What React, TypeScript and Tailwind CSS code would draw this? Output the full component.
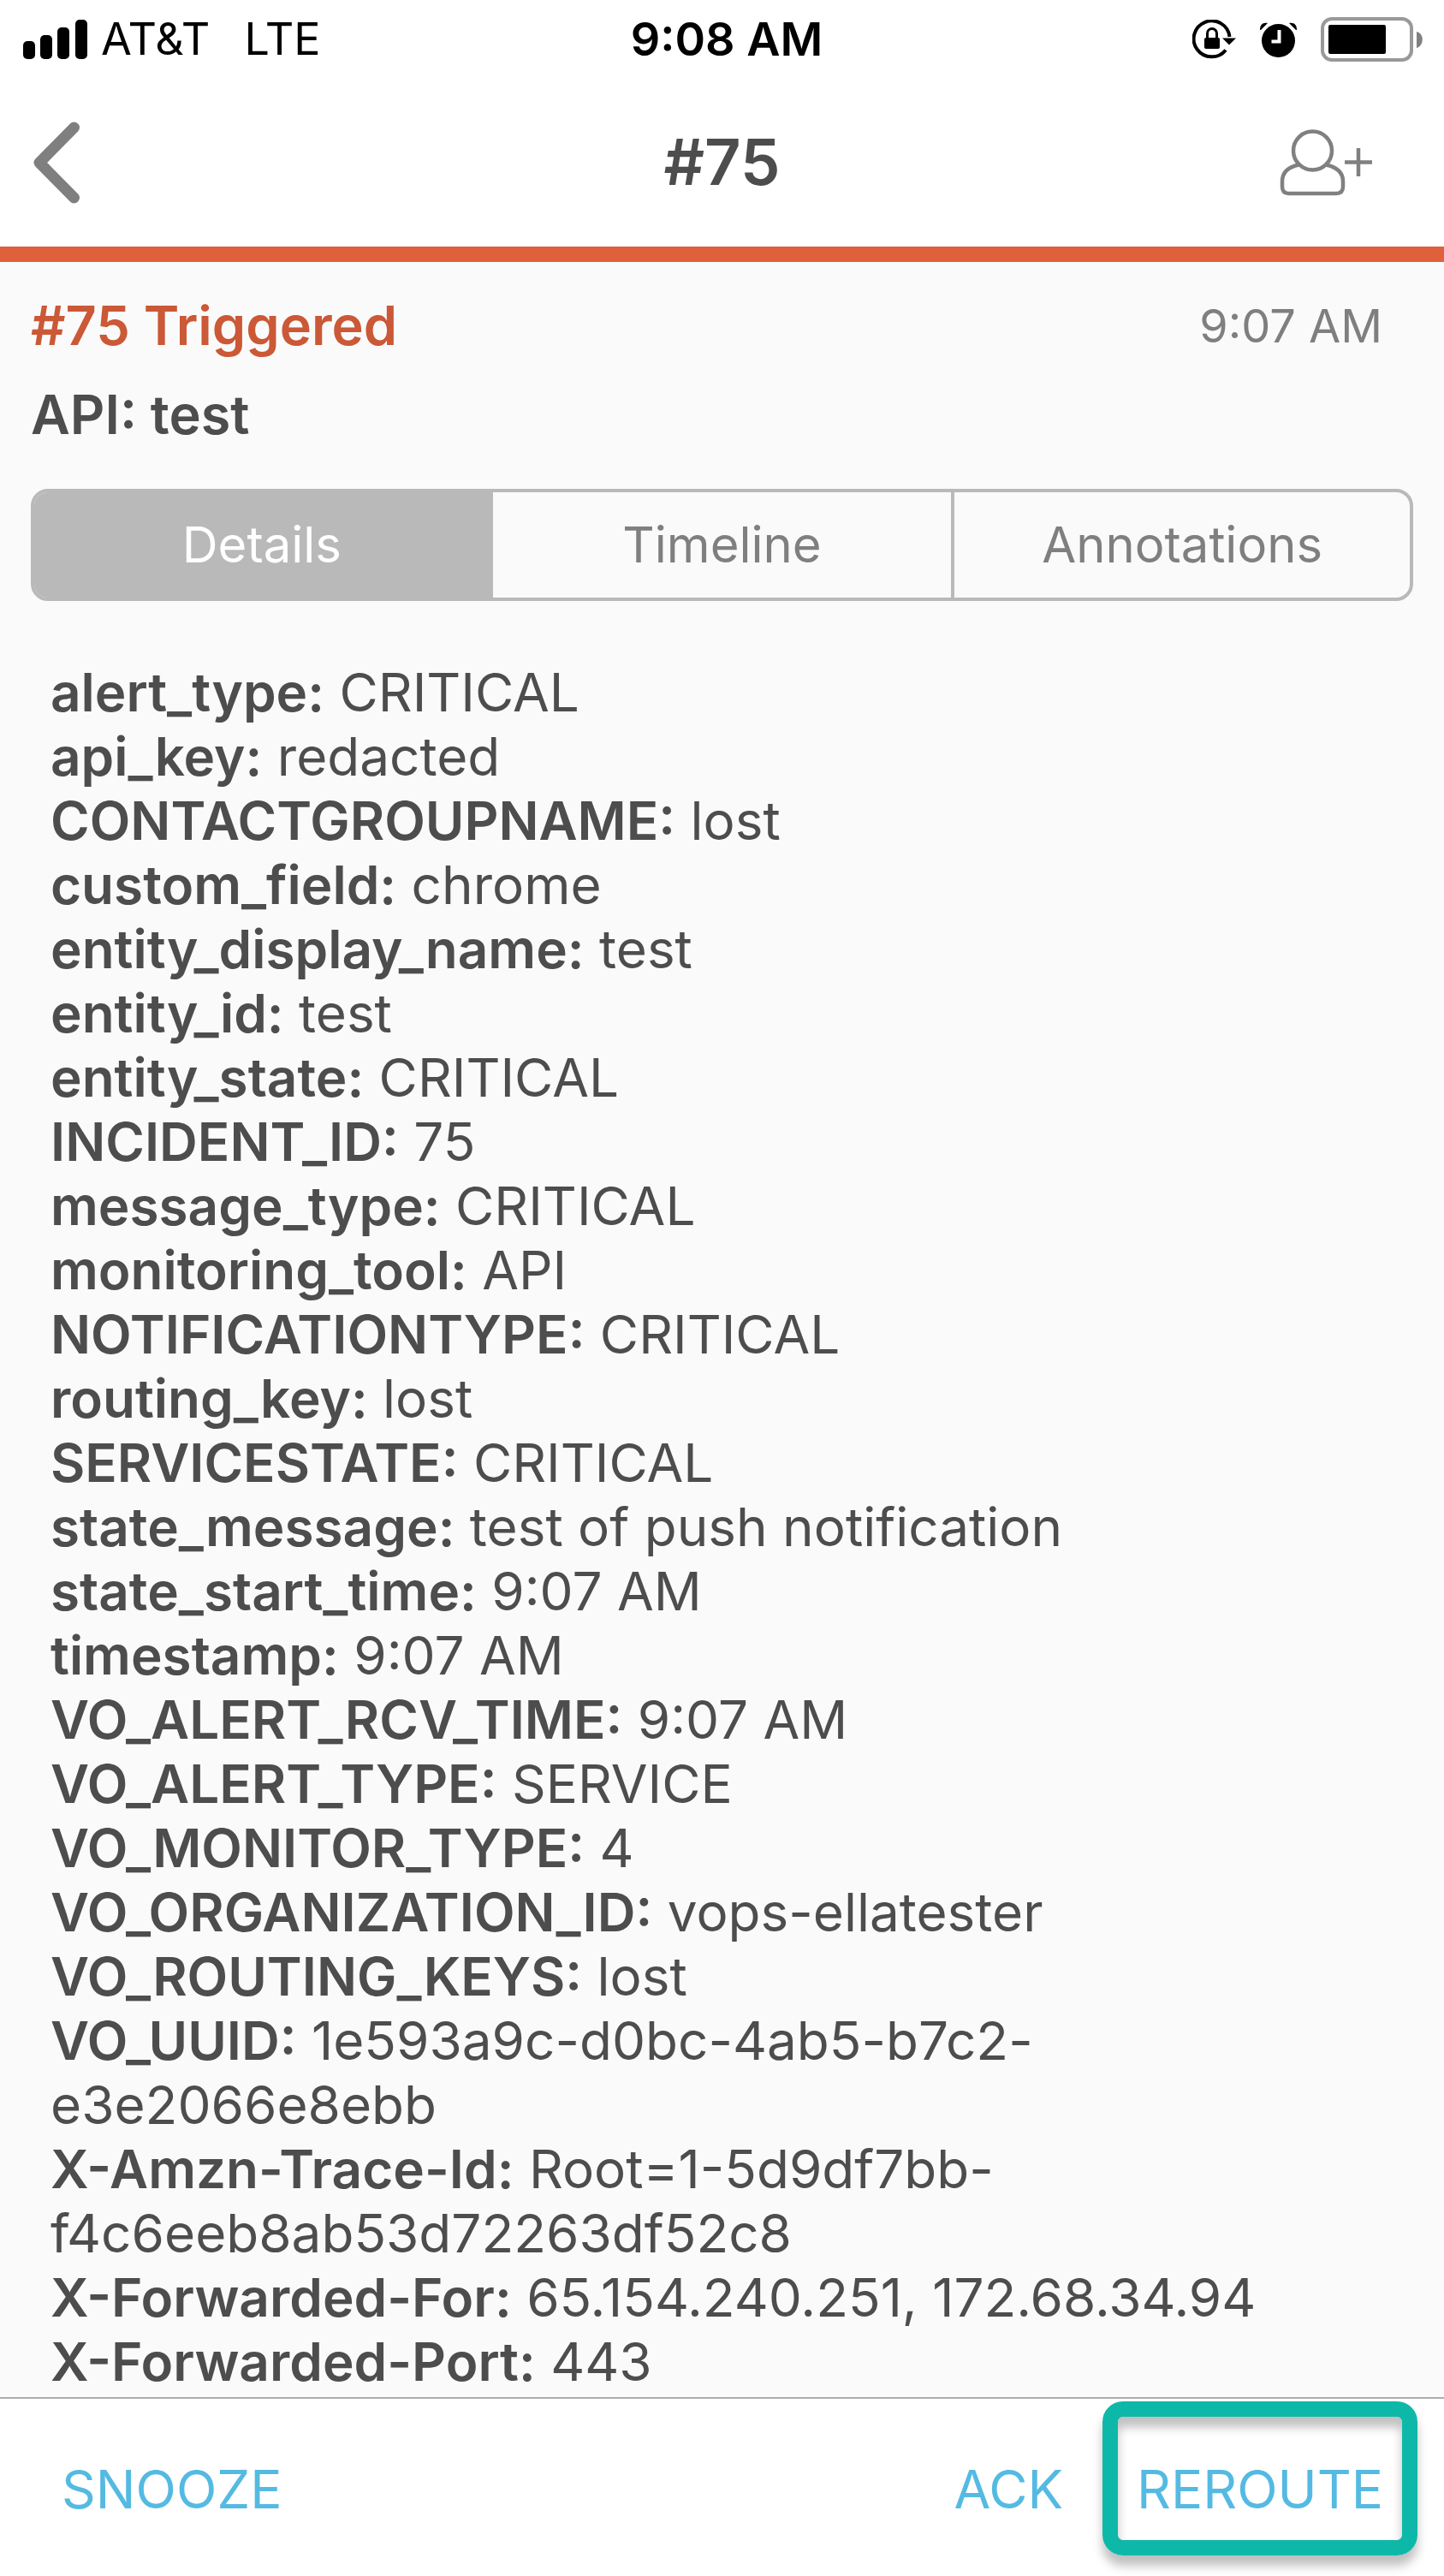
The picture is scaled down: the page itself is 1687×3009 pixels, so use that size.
import React from "react";

type Field = { name: string; value: string };

const fields: Field[] = [
  { name: "alert_type", value: "CRITICAL" },
  { name: "api_key", value: "redacted" },
  { name: "CONTACTGROUPNAME", value: "lost" },
  { name: "custom_field", value: "chrome" },
  { name: "entity_display_name", value: "test" },
  { name: "entity_id", value: "test" },
  { name: "entity_state", value: "CRITICAL" },
  { name: "INCIDENT_ID", value: "75" },
  { name: "message_type", value: "CRITICAL" },
  { name: "monitoring_tool", value: "API" },
  { name: "NOTIFICATIONTYPE", value: "CRITICAL" },
  { name: "routing_key", value: "lost" },
  { name: "SERVICESTATE", value: "CRITICAL" },
  { name: "state_message", value: "test of push notification" },
  { name: "state_start_time", value: "9:07 AM" },
  { name: "timestamp", value: "9:07 AM" },
  { name: "VO_ALERT_RCV_TIME", value: "9:07 AM" },
  { name: "VO_ALERT_TYPE", value: "SERVICE" },
  { name: "VO_MONITOR_TYPE", value: "4" },
  { name: "VO_ORGANIZATION_ID", value: "vops-ellatester" },
  { name: "VO_ROUTING_KEYS", value: "lost" },
  { name: "VO_UUID", value: "1e593a9c-d0bc-4ab5-b7c2-e3e2066e8ebb" },
  { name: "X-Amzn-Trace-Id", value: "Root=1-5d9df7bb-f4c6eeb8ab53d72263df52c8" },
  { name: "X-Forwarded-For", value: "65.154.240.251, 172.68.34.94" },
  { name: "X-Forwarded-Port", value: "443" },
];

const tabs = ["Details", "Timeline", "Annotations"];

function SignalIcon() {
  return (
    <svg width="75" height="46" viewBox="0 0 75 46" aria-hidden="true">
      <rect x="0" y="25" width="14" height="21" rx="5" />
      <rect x="20" y="18" width="14" height="28" rx="5" />
      <rect x="40" y="9" width="14" height="37" rx="5" />
      <rect x="61" y="0" width="14" height="46" rx="5" />
    </svg>
  );
}

function RotationLockIcon() {
  return (
    <svg width="51" height="46" viewBox="0 0 51 46" aria-hidden="true">
      <path d="M43.5 20A21 21 0 1 0 39 35.5" fill="none" stroke="#000" strokeWidth="4" />
      <path d="M35 21.5H51L43 29.5Z" />
      <rect x="14" y="21" width="18" height="13" rx="2" />
      <path d="M17.5 22V16a5.5 5.5 0 0 1 11 0v6" fill="none" stroke="#000" strokeWidth="3" />
    </svg>
  );
}

function AlarmIcon() {
  return (
    <svg width="43" height="41" viewBox="0 0 43 41" aria-hidden="true">
      <circle cx="21.5" cy="21.5" r="19.5" />
      <path d="M0 9C0 3 3 0 9 1L1 9Z" />
      <path d="M43 9C43 3 40 0 34 1L42 9Z" />
      <path d="M13.5 22.5H22.5V9" fill="none" stroke="#fff" strokeWidth="4" />
    </svg>
  );
}

function BatteryIcon() {
  return (
    <svg width="120" height="52" viewBox="0 0 120 52" aria-hidden="true">
      <rect x="2" y="2" width="104" height="48" rx="11" fill="none" stroke="#999" strokeWidth="4" />
      <rect x="9" y="9" width="67" height="34" rx="2" />
      <path d="M112 17C121 19 121 33 112 36Z" fill="#808080" />
    </svg>
  );
}

function BackIcon() {
  return (
    <svg width="56" height="96" viewBox="0 0 56 96" fill="none" aria-hidden="true">
      <path d="M48.5 7L8 48L48.5 89" stroke="#7f7f7f" strokeWidth="13" strokeLinecap="round" strokeLinejoin="round" />
    </svg>
  );
}

function AddPersonIcon() {
  return (
    <svg width="110" height="78" viewBox="0 0 110 78" fill="none" stroke="#808080" strokeWidth="4.5" aria-hidden="true">
      <circle cx="38.5" cy="25" r="22.5" />
      <path d="M22.5 41.5C10 44 3 50 3 61V67C3 73 6 75 11 75H66C71 75 74 73 74 67V61C74 50 66 44 54 41.5" />
      <path d="M76 38.5H108M92 22V55" />
    </svg>
  );
}

export default function App() {
  return (
    <div className="flex min-h-screen flex-col bg-[#fafafa] font-['Inter',sans-serif] text-[#4d4d4d]">
      <header className="border-b-[18px] border-[#de613c] bg-white">
        <div className="grid h-[92px] grid-cols-[1fr_auto_1fr] items-center pl-[27px] pr-6 text-[52px] leading-[92px] text-black">
          <div className="flex items-center gap-4">
            <SignalIcon />
            <span>AT&amp;T</span>
            <span className="pl-6">LTE</span>
          </div>
          <time className="pl-2 text-[54px] font-semibold">9:08 AM</time>
          <div className="flex items-center justify-end gap-7">
            <RotationLockIcon />
            <AlarmIcon />
            <BatteryIcon />
          </div>
        </div>
        <div className="grid h-[196px] grid-cols-[1fr_auto_1fr] items-center px-[38px]">
          <button type="button" aria-label="Back" className="justify-self-start">
            <BackIcon />
          </button>
          <h1 className="pb-0.5 text-[74px] font-semibold">#75</h1>
          <button type="button" aria-label="Add responder" className="mr-11 justify-self-end">
            <AddPersonIcon />
          </button>
        </div>
      </header>

      <main className="flex grow flex-col px-9 pt-[22px]">
        <div className="flex items-center justify-between pr-9">
          <h2 className="text-[63px] font-semibold leading-[104px] text-[#cb5836]">#75 Triggered</h2>
          <time className="text-[54px] text-[#7f7f7f]">9:07 AM</time>
        </div>
        <p className="text-[63px] font-semibold leading-[104px]">API: test</p>

        <div
          role="tablist"
          className="mt-[35px] grid h-[131px] grid-cols-3 overflow-hidden rounded-[20px] border-4 border-[#b9b9b9] text-[58px] text-[#7f7f7f]"
        >
          {tabs.map((tab, i) => (
            <button
              key={tab}
              type="button"
              role="tab"
              aria-selected={i === 0}
              className={i === 0 ? "bg-[#b9b9b9] pr-1 text-white" : i === 2 ? "border-l-4 border-[#b9b9b9]" : ""}
            >
              {tab}
            </button>
          ))}
        </div>

        <dl className="px-[23px] pt-[69px] text-[62px] leading-[75px]">
          {fields.map((f) => (
            <div key={f.name} className="max-w-[1450px]">
              <dt className="inline font-semibold">{f.name}:</dt> <dd className="inline">{f.value}</dd>
            </div>
          ))}
        </dl>
      </main>

      <footer className="flex h-[209px] items-start justify-between border-t-2 border-[#adadad] bg-white pl-[72px] pr-[31px] pt-[3px] text-[62px] text-[#54bae2]">
        <button type="button" className="h-[204px]">
          SNOOZE
        </button>
        <div className="flex items-start gap-[46px]">
          <button type="button" className="h-[204px]">
            ACK
          </button>
          <button
            type="button"
            className="h-[180px] rounded-[24px] border-[18px] border-[#0eb8a9] px-[22px] pt-6 shadow-[0_12px_12px_rgba(0,0,0,0.25),inset_0_12px_12px_rgba(0,0,0,0.25)]"
          >
            REROUTE
          </button>
        </div>
      </footer>
    </div>
  );
}
